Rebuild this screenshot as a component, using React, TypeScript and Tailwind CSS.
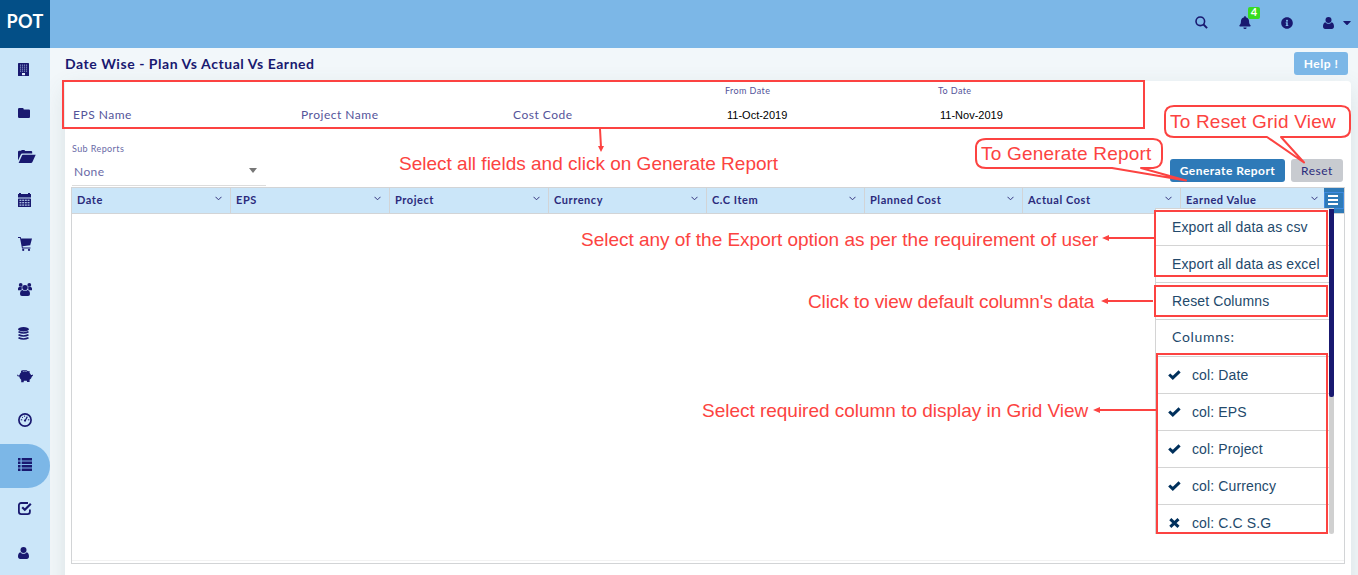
import React from "react";
import { FaBell, FaCaretDown, FaInfoCircle } from "react-icons/fa";

const BuildingIcon = () => (
  <svg width="11" height="13" viewBox="0 0 11 13" fill="currentColor">
    <rect width="11" height="13" rx="0.6" />
    <g fill="#8fa0cf">
      {[1.6, 3.6, 5.6, 7.6].map((y) =>
        [2, 4, 6, 8].map((x) => <rect key={x + "-" + y} x={x} y={y} width="1.1" height="1.1" />),
      )}
    </g>
    <rect x="4" y="10" width="3" height="2.2" fill="#e2eefb" />
  </svg>
);

const FolderIcon = () => (
  <svg width="12" height="10" viewBox="0 0 12 10" fill="currentColor">
    <path d="M1.200 0h3.400q1 0 1.200 1.400H11q1 0 1 1v6.400Q12 10 10.900 10H1.200Q0 10 0 8.800V1.200Q0 0 1.200 0z" />
  </svg>
);

const FolderOpenIcon = () => (
  <svg width="18" height="13" viewBox="0 0 18 13" fill="currentColor">
    <path d="M1.200 .8h1.800L3.800 0h2.600l.8.900h6q1 0 1 1v1.700H4.300Q3.200 3.600 2.700 4.700L0 10.600V2Q0 .8 1.200 .8z" />
    <path d="M4.900 4.800H17.700L14.300 12.200Q13.900 13 13 13H.6L4 5.500Q4.300 4.800 4.900 4.800z" />
  </svg>
);

const CalendarIcon = () => (
  <svg width="13" height="14" viewBox="0 0 13 14" fill="currentColor">
    <path d="M0 1h1V0h2v1h7V0h2v1h1v3.500H0z" />
    <rect y="5.5" width="13" height="8.500" rx="0.6" />
    <g fill="#b7cdec">
      {[6.700, 9.100, 11.500].map((y) =>
        [1.500, 4.200, 6.900, 9.600].map((x) => <rect key={x + "-" + y} x={x} y={y} width="1.900" height="1.200" />),
      )}
    </g>
  </svg>
);

const CartIcon = () => (
  <svg width="14" height="14" viewBox="0 0 14 14" fill="currentColor">
    <path d="M0 0h2.700l.4 1.600H14L12.200 8.200l-7.700 1 .3 1.300h7.700v1H4L2 1H0z" />
    <circle cx="5.200" cy="12.900" r="1.100" />
    <circle cx="11" cy="12.900" r="1.100" />
  </svg>
);

const UsersIcon = () => (
  <svg width="14" height="13" viewBox="0 0 14 13" fill="currentColor">
    <circle cx="2.700" cy="1.900" r="1.900" />
    <circle cx="11.300" cy="1.900" r="1.900" />
    <path d="M0 7.200V5.600Q0 4 1.300 4h2.400L3.800 6.200 3 7.200zM14 7.200V5.600Q14 4 12.700 4h-2.400l-.1 2.200.8 1z" />
    <circle cx="7" cy="4.600" r="2.700" />
    <path d="M4.400 7q2.600 1.700 5.200 0Q12 7.400 12 11q0 2-2 2H4q-2 0-2-2Q2 7.400 4.400 7z" />
  </svg>
);

const DatabaseIcon = () => (
  <svg width="11" height="13" viewBox="0 0 11 13" fill="currentColor">
    <ellipse cx="5.500" cy="2.200" rx="5.500" ry="2.200" />
    <g fill="none" stroke="currentColor" strokeWidth="1.600">
      <path d="M.5 4.800Q5.500 7.300 10.500 4.800M.5 7.800Q5.500 10.300 10.500 7.800M.5 10.700Q5.500 13.200 10.500 10.700" />
    </g>
  </svg>
);

const PiggyIcon = () => (
  <svg className="-ml-px" width="16" height="13" viewBox="0 0 16 13" fill="currentColor">
    <path d="M4.200 2.300Q3.600 1 4.500.6 5.500 0 7.700 0T11 1.300L12.600 1v1.900Q13.700 3.800 14 4.900h1.300L16 4.300v1.200l-1.200 1.200Q14.400 8.600 12.600 9.700V12h-2.500l-.3-1.200H6.900L6.600 12.200H4.200V9.700Q2.500 8.400 2.300 6.600L.6 6.200 0 4.700h.9l.4.8 1.100-.2Q2.800 3.300 4.200 2.300z" />
    <path d="M5.800 1.500q2-.9 4 0" fill="none" stroke="#cbe6f9" strokeWidth="0.600" />
  </svg>
);

const ListIcon = () => (
  <svg width="14" height="13" viewBox="0 0 14 13" fill="currentColor">
    {[0, 3.5, 7, 10.5].map((y) => (
      <g key={y}>
        <rect x="0" y={y} width="2.5" height="2.5" />
        <rect x="3.7" y={y} width="10.3" height="2.5" />
      </g>
    ))}
  </svg>
);

const GaugeIcon = () => (
  <svg width="14" height="14" viewBox="0 0 14 14" fill="none" stroke="currentColor">
    <circle cx="7" cy="7" r="6.1" strokeWidth="1.7" />
    <path d="M7 8L9.3 3.6" strokeWidth="1.2" />
    <circle cx="7" cy="7.6" r="1.1" fill="currentColor" stroke="none" />
    <path d="M2.8 6.8h1.4M9.9 6.8h1.4M4.1 4l.9.9M6.6 2.6v1.2" strokeWidth="1" />
  </svg>
);

const CheckSquareIcon = () => (
  <svg width="14" height="13" viewBox="0 0 14 13" fill="none" stroke="currentColor">
    <path d="M10 1H3.2A2.3 2.3 0 0 0 .9 3.3v6.5a2.3 2.3 0 0 0 2.3 2.3h6.4a2.3 2.3 0 0 0 2.3-2.3V7.4" strokeWidth="1.8" />
    <path d="M4.2 5.2l2.6 2.6 6-6" strokeWidth="2.2" />
  </svg>
);

const SearchIcon = () => (
  <svg width="13" height="13" viewBox="0 0 13 13" fill="none" stroke="currentColor">
    <circle cx="5.3" cy="5.3" r="4.3" strokeWidth="1.6" />
    <path d="M8.5 8.5l3.6 3.6" strokeWidth="1.9" />
  </svg>
);

const PersonIcon = () => (
  <svg width="11" height="12" viewBox="0 0 11 12" fill="currentColor">
    <circle cx="5.5" cy="3" r="3" />
    <path d="M2.4 5.2C.7 5.7 0 7.3 0 9.6 0 11 .9 12 2.200 12h6.600C10.100 12 11 11 11 9.600 11 7.300 10.300 5.700 8.600 5.200 7 7.200 4 7.200 2.400 5.200z" />
  </svg>
);

const TickIcon = () => (
  <svg width="13" height="10" viewBox="0 0 13 10" fill="none" stroke="currentColor" strokeWidth="3">
    <path d="M1.200 4.500l3.600 3.400L11.600 1.400" />
  </svg>
);

const CrossIcon = () => (
  <svg className="ml-px" width="11" height="10" viewBox="0 0 11 10" fill="none" stroke="currentColor" strokeWidth="3">
    <path d="M1.300 1.100l8.200 7.800M9.500 1.100L1.300 8.900" />
  </svg>
);

const navItems = [
  { icon: <BuildingIcon />, pad: "pb-px" },
  { icon: <FolderIcon />, pad: "pb-[2px]" },
  { icon: <FolderOpenIcon />, pad: "pb-[3px]" },
  { icon: <CalendarIcon />, pad: "pb-1" },
  { icon: <CartIcon />, pad: "pb-1" },
  { icon: <UsersIcon />, pad: "pb-px" },
  { icon: <DatabaseIcon />, pad: "pb-px" },
  { icon: <PiggyIcon />, pad: "pb-[3px]" },
  { icon: <GaugeIcon />, pad: "pb-1" },
  { icon: <ListIcon />, pad: "pb-[3px]", active: true },
  { icon: <CheckSquareIcon />, pad: "pb-[3px]" },
  { icon: <PersonIcon />, pad: "pb-[2px]" },
];

const columns = [
  { name: "Date", width: "w-[159px]" },
  { name: "EPS", width: "w-[159px]" },
  { name: "Project", width: "w-[159px]" },
  { name: "Currency", width: "w-[158px]" },
  { name: "C.C Item", width: "w-[158px]" },
  { name: "Planned Cost", width: "w-[158px]" },
  { name: "Actual Cost", width: "w-[158px]" },
  { name: "Earned Value", width: "w-[143px]" },
];

const columnToggles = [
  { name: "col: Date", on: true },
  { name: "col: EPS", on: true },
  { name: "col: Project", on: true },
  { name: "col: Currency", on: true },
  { name: "col: C.C S.G", on: false },
];

const Chevron = () => (
  <svg width="7" height="5" viewBox="0 0 7 5" fill="none" stroke="#34347f" strokeWidth="1">
    <path d="M.5.8l3 3 3-3" />
  </svg>
);

function Header() {
  return (
    <header className="flex h-12 bg-[#7cb7e7] text-[#191970]">
      <div className="flex w-[50px] justify-center bg-[#034f87] pt-2 text-[18px] leading-[26px] font-bold tracking-[0.4px] text-white">POT</div>
      <div className="flex flex-1 items-center justify-end pr-[7px]">
        <span className="mr-[31px] mt-[-4px]"><SearchIcon /></span>
        <span className="relative mr-[30px]">
          <FaBell className="mt-[-3px] h-[13px] w-[12px]" />
          <span className="absolute -top-[12px] left-[9px] flex h-3 w-3 items-center justify-center rounded-[2px] bg-[#37dc22] pb-[2px] text-[11px] leading-3 font-bold text-white">4</span>
        </span>
        <FaInfoCircle className="mr-[30px] mt-[-3px] h-3 w-3" />
        <span className="mr-[9px] mt-[-3px]"><PersonIcon /></span>
        <FaCaretDown className="mt-[-4px] h-[13px] w-[8px]" />
      </div>
    </header>
  );
}

function Sidebar() {
  return (
    <nav className="w-[50px] shrink-0 overflow-hidden bg-[#cbe6f9] text-[#191970]">
      {navItems.map((item, i) => (
        <div key={i} className={"flex h-11 w-[50px] items-center pl-[18px] " + item.pad + (item.active ? " rounded-r-[22px] bg-[#7cb7e7]" : "")}>
          {item.icon}
        </div>
      ))}
    </nav>
  );
}

function Filters() {
  return (
    <div className="grid h-[49px] grid-cols-[228px_212px_212px_213px_1fr] pl-2 text-[12px] tracking-[0.5px] text-[#54549a]">
      <div className="pt-[26px] leading-4">EPS Name</div>
      <div className="pt-[26px] leading-4">Project Name</div>
      <div className="pt-[26px] leading-4">Cost Code</div>
      {[["From Date", "11-Oct-2019"], ["To Date", "11-Nov-2019"]].map(([label, value]) => (
        <div key={label} className="pt-1">
          <div className="text-[9px] leading-3 tracking-[0.4px]">{label}</div>
          <div className="pt-[10px] pl-[2px] font-['Liberation_Sans',sans-serif] text-[11px] leading-4 tracking-[0px] text-black">{value}</div>
        </div>
      ))}
    </div>
  );
}

function ColumnMenu() {
  const row = "flex h-[37px] shrink-0 items-center border-b border-[#d4d4d4]";
  return (
    <div className="absolute top-[20px] left-[1083px] flex h-[326px] w-[179px] overflow-hidden border-l border-t border-[#d4d4d4] bg-white font-['Liberation_Sans',sans-serif] text-[14px] tracking-[0.12px] text-[#23496b]">
      <div className="flex w-[173px] flex-col overflow-hidden whitespace-nowrap">
        <div className={row + " pl-4"}>Export all data as csv</div>
        <div className={row + " pl-4"}>Export all data as excel</div>
        <div className={row + " pl-4"}>Reset Columns</div>
        <div className={row + " pb-[3px] pl-4 font-[Lato,sans-serif] tracking-[0.7px]"}>Columns:</div>
        {columnToggles.map((c) => (
          <div key={c.name} className={row + " pl-3"}>
            <span className="w-6 text-[#00305c]">{c.on ? <TickIcon /> : <CrossIcon />}</span>
            {c.name}
          </div>
        ))}
      </div>
      <div className="w-[5px] rounded-b bg-[#d0d0d0]">
        <div className="h-[188px] rounded-b-[2px] bg-[#191970]" />
      </div>
    </div>
  );
}

function Grid() {
  return (
    <div className="relative ml-[6px] h-[377px] w-[1274px] border border-[#d2d4d6]">
      <div className="flex h-[26px] border-b border-[#d2d4d6] bg-[#cbe6f9]">
        {columns.map((c, i) => (
          <div key={c.name} className={"flex justify-between pl-[5px] text-[11px] font-bold tracking-[0.55px] text-[#2b2b7c] " + c.width + (i < 7 ? " border-r border-[#d2d4d6]" : " pr-px")}>
            <span className="leading-6">{c.name}</span>
            <span className={i < 7 ? "pt-2 pr-[8px]" : "pt-2 pr-[5px]"}><Chevron /></span>
          </div>
        ))}
        <div className="flex flex-1 items-start bg-[#2e7ab8] pt-1">
          <div className="flex h-[17px] w-[20px] justify-center border border-[#3f8be0] pt-[2px] pr-[2px]">
            <svg width="10" height="10" viewBox="0 0 10 10" fill="#fff">
              <path d="M0 0h10v2H0zM0 4h10v2H0zM0 8h10v2H0z" />
            </svg>
          </div>
        </div>
      </div>
      <div className="mt-[346px] h-px bg-[#f2f2f2]" />
      <ColumnMenu />
    </div>
  );
}

function Annotations() {
  const note = "absolute whitespace-nowrap leading-[22px] text-[19px]";
  return (
    <div className="pointer-events-none absolute inset-0 font-['Liberation_Sans',sans-serif] text-[#fc4341]">
      <svg className="absolute inset-0" width="1358" height="575" viewBox="0 0 1358 575" fill="none" stroke="#fc4341" strokeWidth="2">
        <rect x="63" y="81" width="1081" height="47" />
        <rect x="1155" y="211" width="172" height="65" />
        <rect x="1155" y="286" width="172" height="30" />
        <rect x="1157" y="354" width="170" height="179" />
        <path d="M600 129L601 147M1154 238H1108M1153 301H1107M1156 410H1099" />
        <path d="M598 146h6l-3 6zM1109 235v6l-7-3zM1108 298v6l-7-3zM1100 407v6l-7-3z" fill="#fc4341" stroke="none" />
        <path d="M1112 168H986Q976 168 976 159V148Q976 139 986 139H1153Q1162 139 1162 148V159Q1162 167 1153 168H1141L1186 180.500Z" fill="#fff" strokeLinejoin="round" />
        <path d="M1267 137H1174Q1165 137 1165 129V115Q1165 106 1174 106H1341Q1350 106 1350 115V129Q1350 137 1341 137H1281L1304 162.500Z" fill="#fff" strokeLinejoin="round" />
      </svg>
      <div className={note + " top-[153px] left-[399px]"}>Select all fields and click on Generate Report</div>
      <div className={note + " top-[143px] left-[981px] tracking-[0.2px]"}>To Generate Report</div>
      <div className={note + " top-[111px] left-[1170px] tracking-[0.2px]"}>To Reset Grid View</div>
      <div className={note + " top-[229px] left-[581px] tracking-[-0.02px]"}>Select any of the Export option as per the requirement of user</div>
      <div className={note + " top-[291px] left-[808px] tracking-[-0.1px]"}>Click to view default column's data</div>
      <div className={note + " top-[400px] left-[702px] tracking-[-0.02px]"}>Select required column to display in Grid View</div>
    </div>
  );
}

export default function App() {
  return (
    <div className="relative flex h-[575px] w-[1358px] flex-col overflow-hidden bg-[#f2f7fa] font-[Lato,sans-serif]">
      <Header />
      <div className="flex min-h-0 flex-1">
        <Sidebar />
        <main className="flex-1 overflow-hidden pl-[15px]">
          <div className="flex h-[33px] justify-between pr-[10px] text-[#191970]">
            <h1 className="pt-[6px] text-[14px] leading-5 font-bold tracking-[0.55px]">Date Wise - Plan Vs Actual Vs Earned</h1>
            <button className="mt-1 h-[23px] w-[54px] rounded-[3px] bg-[#7cb7e7] text-[12px] font-bold tracking-[0.5px] text-white">Help !</button>
          </div>
          <section className="h-[560px] w-[1286px] rounded-[4px] bg-white shadow-[0_8px_24px_rgba(70,100,90,0.14)]">
            <Filters />
            <div className="flex h-[57px] justify-between pr-[8px]">
              <div className="ml-[7px] w-[194px] pt-[13px] text-[#6a6aa6]">
                <div className="text-[9px] leading-3 tracking-[0.4px]">Sub Reports</div>
                <div className="flex h-[31px] items-center justify-between border-b border-[#dcdcdc] pt-[4px] pr-[9px] pl-[2px] text-[12px] tracking-[0.4px]">
                  None
                  <span className="mb-1 border-x-[4.5px] border-t-[5px] border-x-transparent border-t-[#777]" />
                </div>
              </div>
              <div className="flex gap-[6px] pt-[29px] text-[12px]">
                <button className="h-[23px] w-[115px] rounded-[3px] bg-[#2e7ab8] font-bold tracking-[0.45px] text-white">Generate Report</button>
                <button className="h-[23px] w-[52px] rounded-[3px] bg-[#c8cbd0] tracking-[0.5px] text-[#2b2b7c]">Reset</button>
              </div>
            </div>
            <Grid />
          </section>
        </main>
      </div>
      <Annotations />
    </div>
  );
}
